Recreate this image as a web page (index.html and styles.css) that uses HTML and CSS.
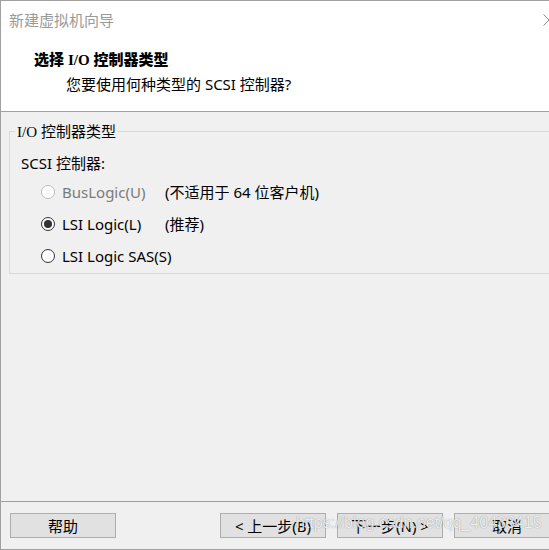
FILE: index.html
```html
<!DOCTYPE html>
<html lang="zh-CN">

<head>
    <meta charset="UTF-8">
    <meta name="viewport" content="width=device-width, initial-scale=1.0">
    <title>新建虚拟机向导</title>
    <link rel="stylesheet" href="styles.css">
</head>

<body>
    <div class="window">
        <div class="titlebar">
            <span class="wintitle">新建虚拟机向导</span>
            <svg class="close" width="12" height="12" viewBox="0 0 12 12">
                <path d="M0.5 0.5 L11.5 11.5 M11.5 0.5 L0.5 11.5" stroke="#8a8a8a" stroke-width="1" fill="none" />
            </svg>
        </div>

        <div class="header">
            <h1>选择 <span class="latin">I/O</span> 控制器类型</h1>
            <p>您要使用何种类型的 SCSI 控制器?</p>
        </div>

        <div class="content">
            <fieldset class="group">
                <legend><span class="latin">I/O</span> 控制器类型</legend>
                <div class="group-body">
                    <div class="caption">SCSI 控制器:</div>

                    <label class="row disabled">
                        <input type="radio" name="scsi" disabled>
                        <span>BusLogic(U)</span>
                        <span class="note">(不适用于 64 位客户机)</span>
                    </label>
                    <label class="row">
                        <input type="radio" name="scsi" checked>
                        <span>LSI Logic(L)</span>
                        <span class="note">(推荐)</span>
                    </label>
                    <label class="row">
                        <input type="radio" name="scsi">
                        <span>LSI Logic SAS(S)</span>
                        <span class="note"></span>
                    </label>
                </div>
            </fieldset>
        </div>

        <div class="footer">
            <button class="btn">帮助</button>
            <button class="btn back">&lt; 上一步(B)</button>
            <button class="btn">下一步(N) &gt;</button>
            <button class="btn">取消</button>
        </div>

        <div class="watermark">https://blog.csdn.net/qq_40433415</div>
    </div>
</body>

</html>
```

FILE: styles.css
```css
* {
    margin: 0;
    padding: 0;
    box-sizing: border-box;
}

body {
    overflow: hidden;
    background-color: #f0f0f0;
    font-family: "Noto Sans", "Noto Sans CJK SC", sans-serif;
    font-size: 15px;
    color: #000;
}

.window {
    position: relative;
    width: 560px;
    height: 550px;
    display: flex;
    flex-direction: column;
    border: 1px solid #a0a0a0;
    border-right: none;
    background-color: #f0f0f0;
}

.titlebar {
    height: 37px;
    background-color: #fff;
    display: flex;
    align-items: center;
    justify-content: space-between;
    padding: 0 5px 0 8px;
}

.wintitle {
    color: #9a9a9a;
    line-height: 18px;
}

.latin {
    font-family: "Liberation Serif", "Noto Sans CJK SC", serif;
}

.header {
    background-color: #fff;
    border-bottom: 1px solid #a0a0a0;
    padding: 12px 0 18px 0;
}

.header h1 {
    font-size: 15px;
    font-weight: 900;
    line-height: 18px;
    padding-left: 33px;
}

.header p {
    line-height: 18px;
    margin-top: 6px;
    padding-left: 65px;
}

.content {
    flex: 1;
}

.group {
    margin: 10px 0 0 8px;
    border: 1px solid #d9d9d9;
    padding: 0;
    min-inline-size: 0;
}

.group legend {
    margin-left: 5px;
    padding: 0 2px;
    line-height: 18px;
}

.group-body {
    padding: 13px 0 1px 0;
}

.caption {
    line-height: 18px;
    padding-left: 11px;
    margin-bottom: 4px;
}

.row {
    display: grid;
    grid-template-columns: 14px 96px auto;
    column-gap: 7px;
    align-items: center;
    height: 32px;
    padding-left: 31px;
    line-height: 18px;
    white-space: nowrap;
}

.row input {
    appearance: none;
    width: 14px;
    height: 14px;
    border: 1px solid #333;
    border-radius: 50%;
    background-color: #fff;
    position: relative;
}

.row input:checked::after {
    content: "";
    position: absolute;
    left: 2px;
    top: 2px;
    width: 8px;
    height: 8px;
    border-radius: 50%;
    background-color: #333;
}

.row.disabled input {
    border-color: #bcbcbc;
}

.row.disabled span:nth-child(2) {
    color: #7a7a7a;
}

.footer {
    height: 48px;
    border-top: 1px solid #a0a0a0;
    display: flex;
    align-items: flex-start;
    padding: 11px 0 0 9px;
}

.btn {
    width: 106px;
    height: 25px;
    border: 1px solid #adadad;
    background-color: #e1e1e1;
    font-family: "Noto Sans", "Noto Sans CJK SC", sans-serif;
    font-size: 15px;
    color: #000;
    margin-left: 11px;
    line-height: 18px;
}

.btn:first-child {
    margin-left: 0;
}

.btn.back {
    margin-left: 104px;
}

.watermark {
    position: absolute;
    left: 295px;
    top: 513px;
    font-family: "Liberation Sans", sans-serif;
    font-size: 16px;
    color: rgba(255, 255, 255, 0.85);
    text-shadow: 0 0 1px rgba(0, 0, 0, 0.45);
    white-space: nowrap;
}
```
